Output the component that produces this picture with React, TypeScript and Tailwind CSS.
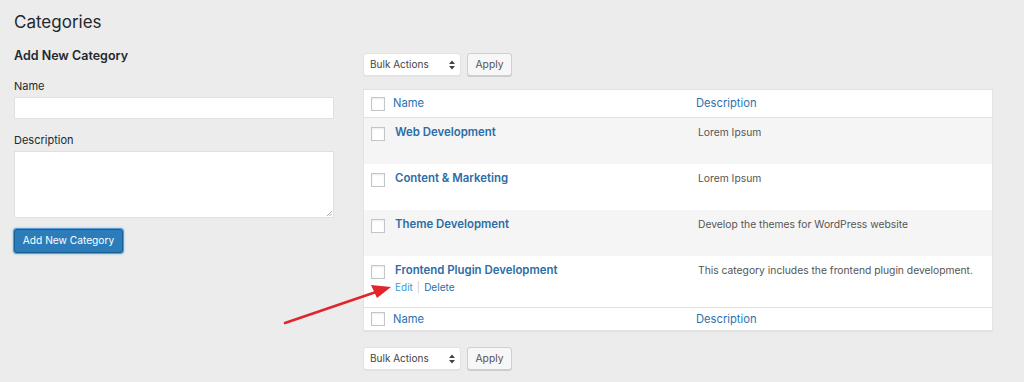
import React from "react";

const font = { fontFamily: "Inter, 'Noto Sans', sans-serif" };

function Check() {
  return <span className="block h-[14px] w-[14px] border border-[#c3c6c9] bg-white shadow-[inset_0_1px_2px_rgba(0,0,0,0.08)]" />;
}

function Bulk() {
  return (
    <div className="flex items-center gap-[6px]">
      <div className="flex h-[23px] w-[98px] items-center justify-between rounded-[3px] border border-[#e2e2e2] bg-white pl-[6px] pr-[5px] text-[10px] text-[#444] shadow-[0_1px_1px_rgba(0,0,0,0.04)]">
        <span>Bulk Actions</span>
        <svg width="6" height="10" viewBox="0 0 6 10" className="text-[#444]">
          <path d="M0 4 L3 0.5 L6 4 Z M0 6 L3 9.5 L6 6 Z" fill="currentColor" />
        </svg>
      </div>
      <button className="h-[23px] w-[45px] rounded-[3px] border border-[#cfcfcf] bg-[#f7f7f7] text-[10.3px] text-[#555] shadow-[0_1px_0_#ccc]">
        Apply
      </button>
    </div>
  );
}

const rows = [
  { name: "Web Development", desc: "Lorem Ipsum", bg: "bg-[#f5f5f5]" },
  { name: "Content & Marketing", desc: "Lorem Ipsum", bg: "bg-white" },
  { name: "Theme Development", desc: "Develop the themes for WordPress website", bg: "bg-[#f5f5f5]" },
  { name: "Frontend Plugin Development", desc: "This category includes the frontend plugin development.", bg: "bg-white", actions: true },
];

export default function App() {
  return (
    <div className="relative h-[382px] w-[1024px] overflow-hidden bg-[#ececec] text-[#23282d]" style={font}>
      <h1 className="pl-[14px] pt-[11px] text-[17px] leading-[22px] font-normal text-[#23282d]">Categories</h1>
      <div className="mt-[11px] flex gap-[29px] px-[14px]">
        <div className="w-[320px]">
          <h2 className="mt-[3px] text-[12.5px] leading-[18px] font-semibold text-[#23282d]">Add New Category</h2>
          <label className="mt-[13px] block text-[11px] leading-[16px] text-[#23282d]">Name</label>
          <div className="mt-[3px] h-[22px] w-full border border-[#e0e0e0] bg-white" />
          <label className="mt-[13px] block text-[11px] leading-[16px] text-[#23282d]">Description</label>
          <div className="relative mt-[3px] h-[67px] w-full border border-[#e0e0e0] bg-white">
            <svg width="6" height="6" viewBox="0 0 6 6" className="absolute bottom-[1px] right-[1px]">
              <path d="M1 6 L6 1 M3.5 6 L6 3.5" stroke="#999" strokeWidth="0.8" />
            </svg>
          </div>
          <button className="mt-[11px] h-[24px] w-[109px] rounded-[3px] border border-[#1a5e91] bg-[#2c7cb9] text-[10.2px] text-white shadow-[0_0_0_1px_#5b9dd9,0_0_2px_1px_rgba(30,140,190,0.6)]">
            Add New Category
          </button>
        </div>
        <div className="w-[630px]">
          <div className="mt-[9px]">
            <Bulk />
          </div>
          <div className="mt-[13px] border border-[#e3e3e3] bg-white shadow-[0_1px_1px_rgba(0,0,0,0.04)]">
            <div className="flex h-[28px] items-center border-b border-[#e1e1e1]">
              <div className="w-[29px] pl-[7px]"><Check /></div>
              <div className="w-[303px] text-[11.2px] text-[#2b72ad]">Name</div>
              <div className="flex-1 text-[11.2px] text-[#2b72ad]">Description</div>
            </div>
            {rows.map((r) => (
              <div key={r.name} className={`flex ${r.actions ? "h-[51px]" : "h-[46px]"} items-start ${r.bg}`}>
                <div className="w-[29px] pl-[7px] pt-[9px]"><Check /></div>
                <div className="w-[303px] pl-[2px] pt-[6px]">
                  <div className="text-[11.4px] leading-[16px] font-semibold text-[#2b6da6]">{r.name}</div>
                  {r.actions && (
                    <div className="mt-[1px] flex items-center text-[10px] leading-[16px]">
                      <span className="text-[#3a9ad6]">Edit</span>
                      <span className="mx-[4px] text-[#ccc]">|</span>
                      <span className="text-[#2b6da6]">Delete</span>
                    </div>
                  )}
                </div>
                <div className="flex-1 pl-[2px] pt-[6px] text-[10.3px] leading-[16px] text-[#555]">{r.desc}</div>
              </div>
            ))}
            <div className="flex h-[23px] items-center border-t border-[#e1e1e1]">
              <div className="w-[29px] pl-[7px]"><Check /></div>
              <div className="w-[303px] text-[11.2px] text-[#2b72ad]">Name</div>
              <div className="flex-1 text-[11.2px] text-[#2b72ad]">Description</div>
            </div>
          </div>
          <div className="mt-[16px]">
            <Bulk />
          </div>
        </div>
      </div>
      <svg className="pointer-events-none absolute left-0 top-0" width="1024" height="382">
        <line x1="285" y1="323" x2="376" y2="292" stroke="#e0252b" strokeWidth="2.5" strokeLinecap="round" />
        <path d="M391 287 L371 285 L377 298 Z" fill="#e0252b" />
      </svg>
    </div>
  );
}
